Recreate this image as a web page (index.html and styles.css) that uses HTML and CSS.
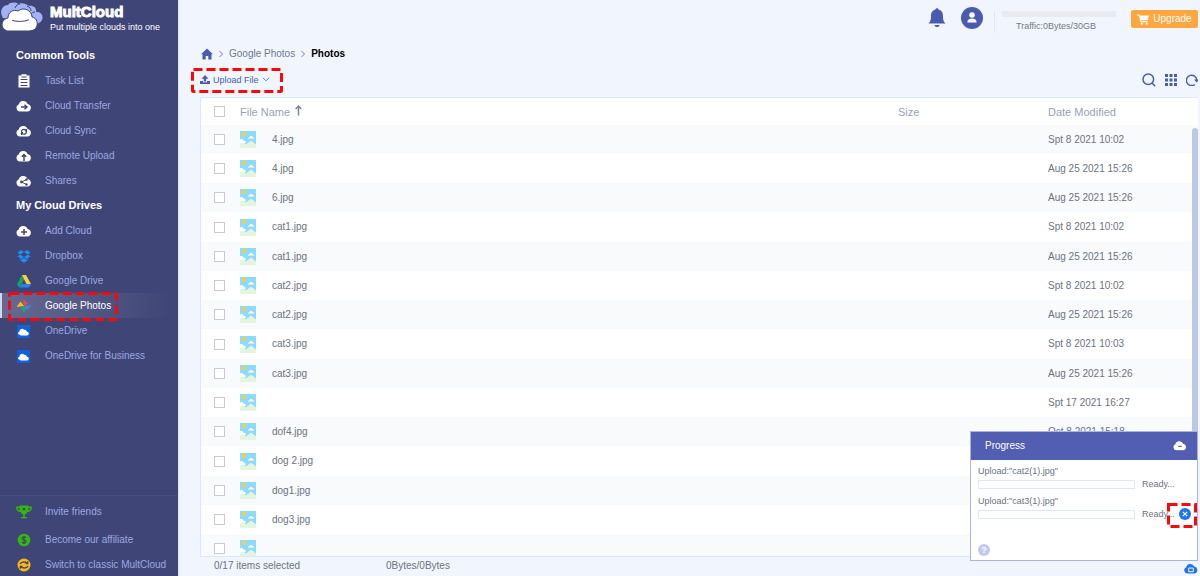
FILE: index.html
```html
<!DOCTYPE html>
<html lang="en">
<head>
<meta charset="utf-8">
<title>MultCloud</title>
<link rel="stylesheet" href="styles.css">
</head>
<body>
<svg class="defs" aria-hidden="true">
  <symbol id="cloud" viewBox="0 0 16 12"><path d="M4 11.5a3.6 3.6 0 0 1-1.300-6.900A4.700 4.700 0 0 1 11.600 3.900 3.900 3.900 0 0 1 12 11.500z"/></symbol>
  <symbol id="photo" viewBox="0 0 16 17">
    <path fill="#8edafe" d="M0 0h16v17H0z"/><circle cx="4" cy="3" r="2" fill="#f6cf3a"/>
    <path fill="#fff" d="M8 7.500c0-1 1-1.200 1.500-1.200.5-1.600 2.800-1.600 3.200 0 1 0 1.500.5 1.500 1.200zM0 8.500c2-1 3 0 3.300 1 1.600 0 2.600.7 2.600 2L4 13H0z"/>
    <path fill="#e3f5de" d="M0 12.500l3-1 3 2 5-4 5 4V17H0z"/>
  </symbol>
  <symbol id="onedrive" viewBox="0 0 13 13"><path fill="#1061dc" d="M0 0h13v13H0z"/><path fill="#fff" d="M2 9.500C.6 9.200.8 6.800 2.400 6.700 2.500 3.800 5.700 2.800 7 4.800c1.800-.5 2.800.9 2.800 2C12.300 6.700 12.500 10.500 10 10.500H4.500C3.500 10.500 3 10 2 9.500z"/></symbol>
</svg>
<div class="app">
  <aside class="sidebar">
    <div class="brand">
      <svg class="brand-logo" viewBox="0 0 44 33" aria-hidden="true">
        <path fill="#a3b1f5" d="M3 18C-1 12 2 5 8 5c2-3 8-3 10-1 4-2 9 0 11 2 5-1 8 3 7 6 7-1 9 8 3 11-4 2-10 2-12 0z"/>
        <path fill="none" stroke="#3f4677" d="M15 8c1-3 3-4 5-4M27 6c3 1 4 3 4 5M35 12c-2 0-3 1-4 2"/>
        <path fill="#fff" stroke="#3f4677" d="M9 31C1 31-1 20 8 18c0-6 5-9 10-7 6-5 14 0 14 6 7 1 8 14-3 14z"/>
        <path fill="none" stroke="#3f4677" stroke-linecap="round" d="M12.500 20.500c4 1.300 12 1.300 16-.5"/>
      </svg>
      <div><div class="brand-name">MultCloud</div><div class="tagline">Put multiple clouds into one</div></div>
    </div>
    <nav class="nav">
      <h2>Common Tools</h2>
      <a href="#"><svg viewBox="0 0 16 14"><path fill="#fff" d="M2.500 1.500h3V.3h5v1.200h3V13.500h-11z"/><path stroke="#3f4677" d="M4.500 5.500h7M4.500 8.500h7M4.500 11.500h7M5.500 3h5"/></svg>Task List</a>
      <a href="#"><svg viewBox="0 0 16 14"><use href="#cloud" y="1" width="16" height="12"/><path fill="none" stroke="#3f4677" stroke-width="1.500" d="M5 8h5M8.500 5.800L11 8l-2.500 2.200"/></svg>Cloud Transfer</a>
      <a href="#"><svg viewBox="0 0 16 14"><use href="#cloud" y="1" width="16" height="12"/><path fill="none" stroke="#3f4677" stroke-width="1.200" d="M5.500 8.500C5 5.500 8 4.500 10 6.500M10.500 7.500c0 3-3 3.500-5 1.500M7 8.500L5.300 8.500M9 7h1.500V5M5.500 11V9h1.500"/></svg>Cloud Sync</a>
      <a href="#"><svg viewBox="0 0 16 14"><use href="#cloud" y="1" width="16" height="12"/><path fill="none" stroke="#3f4677" stroke-width="1.500" d="M8 12V6M5.800 7.800L8 5.500l2.200 2.300"/></svg>Remote Upload</a>
      <a href="#"><svg viewBox="0 0 16 14"><use href="#cloud" y="1" width="16" height="12"/><path fill="none" stroke="#3f4677" d="M10.500 5.500L5.500 8l5 2.500"/><g fill="#3f4677"><circle cx="10.500" cy="5.500" r="1.200"/><circle cx="5.500" cy="8" r="1.400"/><circle cx="10.500" cy="10.500" r="1.200"/></g></svg>Shares</a>
      <h2>My Cloud Drives</h2>
      <a href="#"><svg viewBox="0 0 16 14"><use href="#cloud" y="1" width="16" height="12"/><path stroke="#3f4677" stroke-width="1.500" d="M5 8h6M8 5v6"/></svg>Add Cloud</a>
      <a href="#"><svg viewBox="0 0 16 14"><path fill="#1f8df5" d="M5 1l3 2-4 2.500L1.500 3.400zM11 1L8 3l4 2.500 2.500-2.100zM1.500 7.500L4 5.500 8 8l-3 2zM14.500 7.500L12 5.500 8 8l3 2zM4 10.300l1 .6L8 8.800l3 2.100 1-.6v1L8 13.700l-4-2.400z"/></svg>Dropbox</a>
      <a href="#"><svg viewBox="0 0 16 14"><path fill="#15a45c" d="M6 1L1 10l2.300 3.500L8.300 5z"/><path fill="#fdcf3e" d="M6 1h4l5 9h-4.500z"/><path fill="#2f7df2" d="M5.500 10H15l-2 3.500H3.300z"/></svg>Google Drive</a>
      <a href="#" class="current"><svg viewBox="0 0 16 14"><path fill="#ef4a3b" d="M7 0l5 4.500L8 7z"/><path fill="#4285f4" d="M8 7l7.500-.8L11 11z"/><path fill="#22a565" d="M8 7l2 2.500L8.500 14 4.500 9.500z"/><path fill="#fbbc1e" d="M8 7L.5 8 4.500 2.500z"/></svg>Google Photos
        <svg class="mark mark-nav" aria-hidden="true"><rect x="1.500" y="1.500" width="107" height="26" rx="1"/></svg></a>
      <a href="#"><svg viewBox="0 0 16 14"><use href="#onedrive" x="1" y="1" width="13" height="13"/></svg>OneDrive</a>
      <a href="#"><svg viewBox="0 0 16 14"><use href="#onedrive" x="1" y="1" width="13" height="13"/></svg>OneDrive for Business</a>
    </nav>
    <nav class="nav-bottom">
      <a href="#" class="invite"><svg viewBox="0 0 16 14"><path fill="#35b70b" d="M3.500.5h9v1H16c0 3.500-2 5.500-4.500 5.500-.5 1-1.800 2-2.700 2.300V12H11v1.300H5V12h2.200V9.300C6 9 5 8 4.500 7 2 7 0 5 0 1.500h3.500z"/><path fill="#3f4677" d="M1.500 3h2l.5 2.300C2.500 5 1.700 4 1.500 3zM14.500 3h-2L12 5.300c1.500-.3 2.300-1.300 2.500-2.300zM8 2l.6 1.400H10L9 4.500l.3 1.300L8 5l-1.300.8L7 4.500 6 3.400h1.400z"/></svg>Invite friends</a>
      <a href="#"><svg viewBox="0 0 16 14"><circle cx="8" cy="7" r="6.300" fill="#35b70b"/><path fill="none" stroke="#3f4677" stroke-width="1.200" d="M10 4.800C9 3.400 6 3.700 6.100 5.500c.1 1.600 3.900 1.200 3.900 3C10 10.400 7 10.600 6 9.100M8 3v8"/></svg>Become our affiliate</a>
      <a href="#"><svg viewBox="0 0 16 14"><circle cx="8" cy="7" r="6.500" fill="#fcb913"/><path fill="none" stroke="#3f4677" stroke-width="1.300" d="M4 6c1-2.500 5-2.500 7.500-.7M12 8c-1 2.500-5 2.500-7.500.7M11.700 3.300v2.200H9.500M4.300 10.700V8.500h2.200"/></svg>Switch to classic MultCloud</a>
    </nav>
  </aside>

  <main class="main">
    <header class="topbar">
      <button class="icon-btn" aria-label="Notifications"><svg width="18" height="22" viewBox="0 0 18 22"><path fill="#4b5bb0" d="M7.500 2.500C7.500.8 10.500.8 10.500 2.500 14 3.500 15 6 15 9c0 4 .5 5.500 2.500 7.500H.5C2.500 14.500 3 13 3 9c0-3 1-5.500 4.500-6.500zM6.500 18h5c0 2.700-5 2.700-5 0z"/></svg></button>
      <button class="icon-btn" aria-label="Account"><svg width="22" height="22" viewBox="0 0 22 22"><circle cx="11" cy="11" r="11" fill="#4b5bb0"/><circle cx="11" cy="8" r="2.800" fill="#fff"/><path fill="#fff" d="M6.500 15.500v-1c0-4 9-4 9 0v1z"/></svg></button>
      <div class="traffic"><div class="traffic-bar"></div><span>Traffic:0Bytes/30GB</span></div>
      <button class="upgrade"><svg width="12" height="11" viewBox="0 0 12 11"><path fill="#fff" d="M0 .5h2.300l.5 1H12l-1.300 4.700H4.300l.3 1h6.200v1H3.600L1.700 1.500H0z"/><circle cx="4.800" cy="9.700" r="1.100" fill="#fff"/><circle cx="9.700" cy="9.700" r="1.100" fill="#fff"/></svg>Upgrade</button>
    </header>

    <nav class="crumbs" aria-label="Breadcrumb">
      <a href="#" aria-label="Home"><svg width="12" height="12" viewBox="0 0 12 12"><path fill="#4b5bb0" d="M6 .5L12 6.300h-1.500V11.500H7.300V8H4.700v3.500H1.500V6.300H0z"/></svg></a>
      <svg width="4" height="8" viewBox="0 0 4 8"><path class="line" d="M.5 1l3 3-3 3"/></svg>
      <a href="#">Google Photos</a>
      <svg width="4" height="8" viewBox="0 0 4 8"><path class="line" d="M.5 1l3 3-3 3"/></svg>
      <b>Photos</b>
    </nav>

    <div class="toolbar">
      <button class="upload"><svg width="10" height="10" viewBox="0 0 10 10"><path fill="#4b5bb0" d="M5 0l3.500 3.800H6.200V6.500H3.800V3.800H1.500zM0 6h3v1.300h4V6h3v3H0z"/></svg>Upload File<svg width="8" height="5" viewBox="0 0 8 5"><path class="line" d="M1 .8l3 3 3-3"/></svg>
        <svg class="mark mark-upload" aria-hidden="true"><rect x="1.500" y="1.500" width="89" height="22" rx="1"/></svg></button>
      <div class="tools">
        <button class="icon-btn" aria-label="Search"><svg width="14" height="14" viewBox="0 0 14 14"><circle cx="6.300" cy="6.300" r="5.300" class="stroke"/><path class="stroke" d="M10.200 10.200l3 3"/></svg></button>
        <button class="icon-btn" aria-label="Grid view"><svg width="12" height="12" viewBox="0 0 12 12"><path fill="#4b5bb0" d="M0 0h3v3H0zM4.500 0h3v3h-3zM9 0h3v3H9zM0 4.500h3v3H0zM4.500 4.500h3v3h-3zM9 4.500h3v3H9zM0 9h3v3H0zM4.500 9h3v3h-3zM9 9h3v3H9z"/></svg></button>
        <button class="icon-btn" aria-label="Refresh"><svg width="12" height="12" viewBox="0 0 12 12"><path class="stroke" d="M8.800 10.500A5.200 5.200 0 1 1 10.800 6"/><path fill="#4b5bb0" d="M8 5.500h4V7l-1.500 1.500z"/></svg></button>
      </div>
    </div>

    <section class="list">
      <table>
        <thead><tr><th class="c-check"><input type="checkbox" aria-label="Select all"></th><th class="c-name">File Name <svg width="7" height="11" viewBox="0 0 7 11"><path fill="none" stroke="#7d879c" stroke-width="1.500" d="M3.500 10.500V1.500M.7 4l2.800-3 2.800 3"/></svg></th><th class="c-size">Size</th><th class="c-date">Date Modified</th></tr></thead>
        <tbody>
          <tr><td><input type="checkbox" aria-label="Select file"></td><td><span class="file"><svg><use href="#photo"/></svg>4.jpg</span></td><td></td><td>Spt 8 2021 10:02</td></tr>
          <tr><td><input type="checkbox" aria-label="Select file"></td><td><span class="file"><svg><use href="#photo"/></svg>4.jpg</span></td><td></td><td>Aug 25 2021 15:26</td></tr>
          <tr><td><input type="checkbox" aria-label="Select file"></td><td><span class="file"><svg><use href="#photo"/></svg>6.jpg</span></td><td></td><td>Aug 25 2021 15:26</td></tr>
          <tr><td><input type="checkbox" aria-label="Select file"></td><td><span class="file"><svg><use href="#photo"/></svg>cat1.jpg</span></td><td></td><td>Spt 8 2021 10:02</td></tr>
          <tr><td><input type="checkbox" aria-label="Select file"></td><td><span class="file"><svg><use href="#photo"/></svg>cat1.jpg</span></td><td></td><td>Aug 25 2021 15:26</td></tr>
          <tr><td><input type="checkbox" aria-label="Select file"></td><td><span class="file"><svg><use href="#photo"/></svg>cat2.jpg</span></td><td></td><td>Spt 8 2021 10:02</td></tr>
          <tr><td><input type="checkbox" aria-label="Select file"></td><td><span class="file"><svg><use href="#photo"/></svg>cat2.jpg</span></td><td></td><td>Aug 25 2021 15:26</td></tr>
          <tr><td><input type="checkbox" aria-label="Select file"></td><td><span class="file"><svg><use href="#photo"/></svg>cat3.jpg</span></td><td></td><td>Spt 8 2021 10:03</td></tr>
          <tr><td><input type="checkbox" aria-label="Select file"></td><td><span class="file"><svg><use href="#photo"/></svg>cat3.jpg</span></td><td></td><td>Aug 25 2021 15:26</td></tr>
          <tr><td><input type="checkbox" aria-label="Select file"></td><td><span class="file"><svg><use href="#photo"/></svg></span></td><td></td><td>Spt 17 2021 16:27</td></tr>
          <tr><td><input type="checkbox" aria-label="Select file"></td><td><span class="file"><svg><use href="#photo"/></svg>dof4.jpg</span></td><td></td><td>Oct 8 2021 15:18</td></tr>
          <tr><td><input type="checkbox" aria-label="Select file"></td><td><span class="file"><svg><use href="#photo"/></svg>dog 2.jpg</span></td><td></td><td></td></tr>
          <tr><td><input type="checkbox" aria-label="Select file"></td><td><span class="file"><svg><use href="#photo"/></svg>dog1.jpg</span></td><td></td><td></td></tr>
          <tr><td><input type="checkbox" aria-label="Select file"></td><td><span class="file"><svg><use href="#photo"/></svg>dog3.jpg</span></td><td></td><td></td></tr>
          <tr><td><input type="checkbox" aria-label="Select file"></td><td><span class="file"><svg><use href="#photo"/></svg></span></td><td></td><td></td></tr>
        </tbody>
      </table>
      <div class="thumb"></div>
    </section>
    <footer class="status"><span class="selected">0/17 items selected</span><span>0Bytes/0Bytes</span></footer>
  </main>

  <section class="progress">
    <header><h3>Progress</h3><button class="icon-btn" aria-label="Minimise"><svg width="14" height="11" viewBox="0 0 16 12"><use href="#cloud" fill="#fff"/><path stroke="#4b5bb0" stroke-width="1.300" d="M6 7h4"/></svg></button></header>
    <div class="jobs">
      <div class="job"><div class="job-name">Upload:"cat2(1).jpg"</div><div class="job-row"><div class="track"></div><span>Ready...</span></div></div>
      <div class="job"><div class="job-name">Upload:"cat3(1).jpg"</div><div class="job-row"><div class="track"></div><span>Ready...</span>
        <button class="cancel" aria-label="Cancel upload"><svg width="12" height="12" viewBox="0 0 12 12"><circle cx="6" cy="6" r="6" fill="#2274ec"/><path stroke="#fff" stroke-width="1.200" d="M3.800 3.800l4.400 4.400M8.200 3.800L3.800 8.200"/></svg>
          <svg class="mark mark-cancel" aria-hidden="true"><rect x="1.500" y="1.500" width="27" height="22"/></svg></button></div></div>
    </div>
    <button class="help" aria-label="Help">?</button>
  </section>
  <button class="launcher" aria-label="Show transfers"><svg width="16" height="11" viewBox="0 0 16 12"><use href="#cloud" fill="#2274ec"/><path fill="none" stroke="#fff" d="M5.500 5.500h5v4h-5z"/></svg></button>
</div>
</body>
</html>
```
FILE: styles.css
```css
* { box-sizing: border-box; }
body { margin: 0; font: 10px/14px "Liberation Sans", Arial, sans-serif; color: #6c7380; background: #f1f6fe; }
button { padding: 0; border: 0; background: none; font: inherit; color: inherit; }
a { color: inherit; text-decoration: none; }
svg { display: block; flex: none; }
h2, h3 { margin: 0; font-size: 11px; }
.defs { position: absolute; width: 0; height: 0; }
.line { fill: none; stroke: #6f79ba; }
.stroke { fill: none; stroke: #4b5bb0; stroke-width: 1.5; }

.app { position: relative; display: flex; height: 100vh; overflow: hidden; }

.sidebar { display: flex; flex-direction: column; flex: none; width: 179px; background: #3f4677; border-right: 1px solid #dfe3f0; color: #9da6e0; }
.brand { display: flex; gap: 6px; height: 43px; color: #fff; white-space: nowrap; }
.brand-logo { width: 44px; height: 33px; }
.brand-name { margin-top: 3px; font-size: 15px; font-weight: bold; line-height: 17px; -webkit-text-stroke: 1px #fff; }
.tagline { font-size: 9px; }
.nav h2 { padding-left: 16px; line-height: 25px; color: #fff; }
.nav a, .nav-bottom a { position: relative; display: flex; align-items: center; gap: 13px; height: 25px; padding-left: 16px; white-space: nowrap; }
.nav a > svg:first-child, .nav-bottom svg { width: 16px; height: 14px; fill: #fff; }
.nav .current { color: #fff; background: linear-gradient(90deg, #666a93, #3f4677 95%); box-shadow: inset 2px 0 #d5d8ea; }
.nav-bottom { display: flex; flex-direction: column; gap: 3px; margin-top: auto; padding-top: 5px; border-top: 1px solid #454c7f; }
.nav-bottom a { height: 22px; }
.nav-bottom .invite { margin-bottom: 3px; }

.mark { position: absolute; pointer-events: none; overflow: visible; }
.mark rect { fill: none; stroke: #fb0707; stroke-width: 3; stroke-dasharray: 9 4; }
.mark-nav { left: 8px; top: -1px; width: 110px; height: 29px; }
.mark-upload { left: -9px; top: -5px; width: 92px; height: 25px; }
.mark-cancel { left: -12px; top: -5px; width: 30px; height: 25px; }

.main { display: flex; flex-direction: column; flex: 1; min-width: 0; padding: 0 2px 0 21px; }
.icon-btn { display: flex; }
.topbar { display: flex; align-items: flex-start; justify-content: flex-end; gap: 15px; height: 42px; padding-top: 7px; }
.traffic { margin: 4px 0 0 -4px; padding-left: 7px; border-left: 1px solid #e1e6ef; font-size: 9px; line-height: 13px; color: #737987; }
.traffic span { padding-left: 14px; }
.traffic-bar { width: 114px; height: 6px; margin-bottom: 3px; background: #e9ebf3; }
.upgrade { display: flex; align-items: center; justify-content: center; gap: 4px; width: 67px; height: 18px; margin-top: 3px; border-radius: 2px; background: #ffa63f; color: #fff; }
.crumbs { display: flex; align-items: center; gap: 6px; height: 24px; padding-left: 1px; color: #6d7694; }
.crumbs b { color: #000; }
.toolbar { display: flex; align-items: center; justify-content: space-between; height: 27px; margin-bottom: 4px; }
.upload { position: relative; display: flex; align-items: center; gap: 3px; font-size: 9px; color: #4b5bb0; }
.tools { display: flex; align-items: center; gap: 9px; }

.list { position: relative; flex: 1; min-height: 0; overflow: hidden; background: #fff; border: solid #dbe7fb; border-width: 1px 0 1px 1px; }
table { width: 100%; table-layout: fixed; border-collapse: collapse; }
th { height: 27px; padding: 0; font-size: 11px; font-weight: normal; text-align: left; color: #99a3b5; }
th svg { display: inline-block; margin-left: 2px; }
.c-check { width: 31px; }
.c-size, .c-date { width: 150px; }
td { height: 29px; padding: 0; }
tbody tr:nth-child(4n) td { height: 30px; }
tbody tr:nth-child(odd) { background: #f8fafc; }
th:first-child, td:first-child { padding-left: 13px; }
.c-name, td:nth-child(2) { padding-left: 8px; }
input { display: block; appearance: none; width: 11px; height: 11px; margin: 0; border: 1px solid #c8ccd2; background: #fff; }
.file { display: flex; align-items: center; gap: 16px; }
.file svg { width: 16px; height: 17px; }
.thumb { position: absolute; right: 0; top: 30px; bottom: 20px; width: 6px; border-radius: 3px; background: #bdc7e6; }
.status { display: flex; height: 19px; padding-left: 14px; line-height: 18px; }
.selected { width: 172px; }

.progress { position: absolute; right: 2px; bottom: 15px; display: flex; flex-direction: column; width: 228px; background: #fff; border: 1px solid #a9b3e6; font-size: 9px; line-height: 13px; }
.progress header { display: flex; align-items: center; justify-content: space-between; height: 28px; padding: 0 10px 2px 14px; background: #525eb1; color: #fff; }
.progress h3 { font-size: 10px; font-weight: normal; }
.jobs { display: flex; flex-direction: column; gap: 4px; padding: 5px 7px 0; }
.job-row { position: relative; display: flex; align-items: center; gap: 7px; }
.track { width: 157px; height: 9px; border: 1px solid #dfe6f5; }
.cancel { position: absolute; right: -1px; top: 0; }
.help { width: 12px; height: 12px; margin: 23px 0 4px 7px; border-radius: 50%; background: #c0c9f4; color: #fff; line-height: 12px; font-weight: bold; }
.launcher { position: absolute; right: 1px; bottom: 2px; }
```
